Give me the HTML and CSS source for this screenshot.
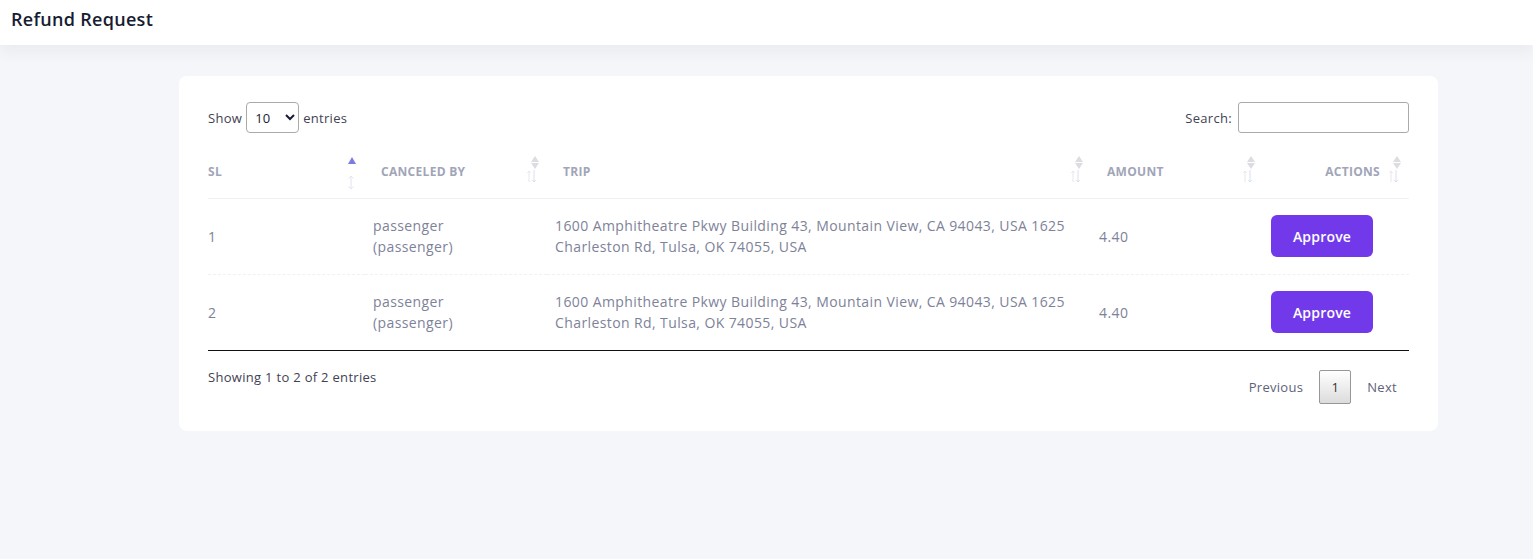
FILE: index.html
```html
<!DOCTYPE html>
<html lang="en">
<head>
<meta charset="utf-8">
<title>Refund Request</title>
<link rel="stylesheet" href="styles.css">
</head>
<body>
<header class="topbar">
  <h1 class="page-title">Refund Request</h1>
</header>
<main class="content">
  <section class="card">
    <div class="controls">
      <label class="length">Show
        <select class="length-select">
          <option>10</option>
          <option>25</option>
          <option>50</option>
          <option>100</option>
        </select>
        entries</label>
      <label class="search">Search: <input class="search-input" type="search"></label>
    </div>
    <table class="table">
      <colgroup>
        <col class="c1"><col class="c2"><col class="c3"><col class="c4"><col class="c5">
      </colgroup>
      <thead>
        <tr>
          <th class="first">SL
            <span class="sort sorted">
              <svg width="10" height="34" viewBox="0 0 10 34"><path d="M5 0 L9 7 L1 7 Z" fill="#7c7ce4"/><path d="M4 32 V19 M1.5 21.5 L4 19 L6.5 21.5 M1.5 29.5 L4 32 L6.5 29.5" stroke="#e4e4ec" stroke-width="1" fill="none"/></svg>
            </span>
          </th>
          <th>CANCELED BY<span class="sort"><svg width="14" height="28" viewBox="0 0 14 28"><path d="M9 0 L13 6 L5 6 Z M5 7 L13 7 L9 13 Z" fill="#dcdce2"/><path d="M3 26 V15 M1.3 16.8 L3 15 L4.7 16.8" stroke="#ebe4ec" stroke-width="1" fill="none"/><path d="M8 14 V26 M6.3 24.2 L8 26 L9.7 24.2" stroke="#d8e0f0" stroke-width="1" fill="none"/></svg></span></th>
          <th>TRIP<span class="sort"><svg width="14" height="28" viewBox="0 0 14 28"><path d="M9 0 L13 6 L5 6 Z M5 7 L13 7 L9 13 Z" fill="#dcdce2"/><path d="M3 26 V15 M1.3 16.8 L3 15 L4.7 16.8" stroke="#ebe4ec" stroke-width="1" fill="none"/><path d="M8 14 V26 M6.3 24.2 L8 26 L9.7 24.2" stroke="#d8e0f0" stroke-width="1" fill="none"/></svg></span></th>
          <th>AMOUNT<span class="sort"><svg width="14" height="28" viewBox="0 0 14 28"><path d="M9 0 L13 6 L5 6 Z M5 7 L13 7 L9 13 Z" fill="#dcdce2"/><path d="M3 26 V15 M1.3 16.8 L3 15 L4.7 16.8" stroke="#ebe4ec" stroke-width="1" fill="none"/><path d="M8 14 V26 M6.3 24.2 L8 26 L9.7 24.2" stroke="#d8e0f0" stroke-width="1" fill="none"/></svg></span></th>
          <th class="right">ACTIONS<span class="sort"><svg width="14" height="28" viewBox="0 0 14 28"><path d="M9 0 L13 6 L5 6 Z M5 7 L13 7 L9 13 Z" fill="#dcdce2"/><path d="M3 26 V15 M1.3 16.8 L3 15 L4.7 16.8" stroke="#ebe4ec" stroke-width="1" fill="none"/><path d="M8 14 V26 M6.3 24.2 L8 26 L9.7 24.2" stroke="#d8e0f0" stroke-width="1" fill="none"/></svg></span></th>
        </tr>
      </thead>
      <tbody>
        <tr>
          <td class="first">1</td>
          <td class="name">passenger (passenger)</td>
          <td>1600 Amphitheatre Pkwy Building 43, Mountain View, CA 94043, USA 1625 Charleston Rd, Tulsa, OK 74055, USA</td>
          <td>4.40</td>
          <td><button class="btn-approve">Approve</button></td>
        </tr>
        <tr>
          <td class="first">2</td>
          <td class="name">passenger (passenger)</td>
          <td>1600 Amphitheatre Pkwy Building 43, Mountain View, CA 94043, USA 1625 Charleston Rd, Tulsa, OK 74055, USA</td>
          <td>4.40</td>
          <td><button class="btn-approve">Approve</button></td>
        </tr>
      </tbody>
    </table>
    <div class="footer">
      <div class="info">Showing 1 to 2 of 2 entries</div>
      <nav class="pager">
        <a class="page-link">Previous</a>
        <a class="page-link current">1</a>
        <a class="page-link">Next</a>
      </nav>
    </div>
  </section>
</main>
</body>
</html>
```

FILE: styles.css
```css
* { box-sizing: border-box; }
html, body { margin: 0; padding: 0; }
body {
  background: #f4f6f9;
  font-family: "Open Sans", "Noto Sans", sans-serif;
  color: #3f4254;
  height: 559px;
  overflow: hidden;
}
.topbar {
  background: #fff;
  height: 45px;
  padding: 0 11px;
  display: flex;
  align-items: center;
  box-shadow: 0 8px 12px rgba(82, 63, 105, 0.05);
}
.page-title {
  margin: 0 0 8px 0;
  font-size: 18px;
  font-weight: 600;
  color: #181c32;
  letter-spacing: 0.3px;
}
.content {
  padding: 31px 95px 0 179px;
}
.card {
  background: #fff;
  border-radius: 8px;
  padding: 26px 29px 27px 29px;
}
.controls {
  display: flex;
  justify-content: space-between;
  align-items: center;
  height: 31px;
  font-size: 13px;
  letter-spacing: 0.3px;
  color: #3f4254;
}
.length, .search {
  display: flex;
  align-items: center;
  gap: 4px;
}
.length-select {
  width: 53px;
  height: 31px;
  border: 1px solid #aaa;
  border-radius: 4px;
  background: #fff;
  font-family: inherit;
  font-size: 13px;
  padding: 0 4px;
  color: #181c32;
}
.search { gap: 6px; }
.search-input {
  width: 171px;
  height: 31px;
  border: 1px solid #aaa;
  border-radius: 3px;
  background: #fff;
}
.table {
  width: 100%;
  border-collapse: collapse;
  margin-top: 14px;
  table-layout: fixed;
}
.c1 { width: 157px; }
.c2 { width: 182px; }
.c3 { width: 544px; }
.c4 { width: 172px; }
.c5 { width: 146px; }
.table th {
  position: relative;
  text-align: left;
  font-size: 12px;
  font-weight: 700;
  color: #a1a5b7;
  padding: 16px 8px 17px 16px;
  line-height: 18px;
  border-bottom: 1px solid #eff2f5;
  letter-spacing: 0.3px;
}
.table th.first { padding-left: 0; }
.table th.right { text-align: right; padding-right: 29px; }
.sort {
  position: absolute;
  right: 7px;
  top: 9px;
  line-height: 0;
}
.sort.sorted { right: 8px; top: 10px; }
.table td {
  font-size: 14px;
  font-weight: 500;
  color: #7e8299;
  line-height: 21px;
  letter-spacing: 0.4px;
  padding: 16px 8px 17px 8px;
  vertical-align: middle;
  border-bottom: 1px dashed #eff2f5;
}
.table td.name { padding-right: 50px; }
.table td.first { padding-left: 0; }
.table tbody tr:last-child td { border-bottom: 1px solid #111; }
.btn-approve {
  width: 102px;
  height: 42px;
  border: none;
  border-radius: 6px;
  background: #7239ea;
  color: #fff;
  font-family: inherit;
  font-size: 14px;
  font-weight: 600;
  letter-spacing: 0.2px;
}
.footer {
  display: flex;
  justify-content: space-between;
  align-items: flex-start;
}
.info {
  padding-top: 16px;
  font-size: 13px;
  line-height: 20px;
  font-weight: 500;
  letter-spacing: 0.3px;
  color: #3f4254;
}
.pager {
  margin-top: 19px;
  display: flex;
  align-items: center;
  margin-right: -4px;
}
.page-link {
  font-size: 13px;
  color: #5e6278;
  padding: 0 16px;
  line-height: 34px;
  letter-spacing: 0.3px;
}
.page-link.current {
  width: 32px;
  height: 34px;
  padding: 0;
  text-align: center;
  border: 1px solid #979797;
  border-radius: 2px;
  background: linear-gradient(to bottom, #fff 0%, #dcdcdc 100%);
  color: #333;
  line-height: 32px;
}
```
